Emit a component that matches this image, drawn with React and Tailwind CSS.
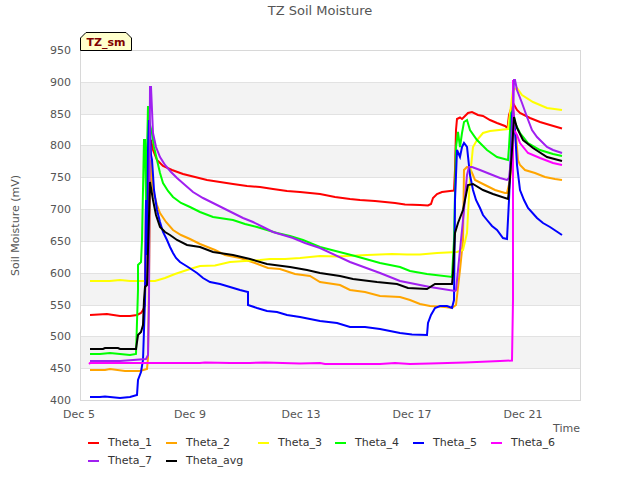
const series = [
  ["#ff0000", "90,315 107,314 110,314.5 120,316 130,316 137,315 141,313 143,310 145,305 146,201 147,250 149,150 151,140 153,150 157,160 163,166 172,170 183,174 195,177 207,180 220,182 233,184 247,186 260,187 273,189 287,191 300,192 320,194 335,197 350,199 360,200 375,201 395,203 405,204.5 420,205 428,205.5 431,204 433,198 437,194 442,192 450,191 454,190.5 455,170 456,130 457,119 460,117.5 462,119 465,116 468,113 472,112 478,115 483,116 490,120 497,123 505,126 507.5,128 509,115 513,103 517,110 520,113 530,118 540,122 550,125 562,128.5"],
  ["#ffa500", "90,370 105,370 110,369 125,371 140,371 147,369 148,358 150,200 151,160 153,190 157,205 160,213 166,222 173,230 181,235 190,239 200,244 215,250 225,255 240,258 255,263 268,268 280,269 295,274 310,276 320,282 340,285 350,290 365,292 380,296 400,297 410,300 420,304 430,306 445,307 452,308 456,305 460,270 463,240 464,170 467,167 470,168 475,180 485,185 495,190 505,193 507,193 510,180 512,160 514,130 516,135 518,160 520,165 525,170 535,173 545,177 555,179 562,180"],
  ["#ffff00", "90,281 110,281 120,280 130,281 145,281 155,281 165,278 175,274 190,269 200,266 215,265.5 230,262 245,261 260,260 270,259 285,259 300,258 320,256 337,256.5 367,255 392,254 407,254.6 420,254.6 437,253 457,252 463,250 467,233 470,177 473,147 477,140 483,133 490,131 508,129 510,113 513,90 517,88 522,95 533,102 547,108 562,110"],
  ["#00ff00", "90,354 100,354 110,353 120,354 130,355 136,354 138,290 138,265 141,262 142,240 144,140 145,140 146,200 148,106 150,125 152,133 154,147 157,160 160,173 163,183 168,191 173,197 181,203 190,207 200,212 213,217 233,220 245,224 257,227 277,233 290,236 303,240 320,247 355,256 380,263 400,267 410,271 427,274 452,277 454,240 456,147 458,132 460,147 462,133 464,122 467,120 470,130 477,140 487,150 497,157 508,160 509,147 511,113 513,110 515,123 520,133 528,143 540,150 553,154 562,156"],
  ["#0000ff", "90,397 100,397 105,396.5 120,398 130,397 137,395 138,380 141,372 143,360 145,300 146,200 147,255 148,150 149,120 150,130 151,155 152,160 154,190 157,210 160,222 163,232 167,240 170,247 173,253 176,258 180,262 188,267 197,273 203,278 210,282 220,284 230,287 240,290 248,292 248,305 257,308 267,311 277,312 287,315 300,317 320,321 337,323 350,327 365,327 380,329 390,331 400,333 412,334.5 427,335 428,323 431,315 435,308 440,306 447,306 452,308 454,300 455,200 457,150 460,157 462,147 464,143 467,147 470,175 473,190 476,200 480,208 483,215 487,220 492,226 497,230 503,238 507,239 509,200 511,150 512,115 513,110 515,130 517,165 520,190 524,200 528,208 537,218 543,223 550,227 556,231 562,235"],
  ["#ff00ff", "89,364 90,363 130,363 148,363 200,363 205,362.5 230,363 250,363 265,362.5 300,363.5 320,363 325,364 380,364 395,363 410,364 430,363.5 465,362.5 500,361 512,360.5 513,300 513,80 514,130 517,135 520,143 528,153 540,158 553,163 562,165"],
  ["#a020f0", "90,361 120,361 146,359 148,355 149,300 150,87 151,87 153,133 156,147 160,157 165,165 171,172 177,178 185,185 193,192 203,198 213,203 223,208 233,213 243,218 253,222 263,227 273,232 283,235 293,238 305,243 320,248 350,262 380,273 400,281 420,285 430,287 455,291 456,290 460,250 464,210 467,175 469,167 472,167 480,170 490,174 500,178 507,180 509,178 511,160 513,110 514,80 515,80 517,90 522,103 527,117 532,130 537,137 547,147 553,150 562,153"],
  ["#000000", "90,349 103,349 105,348 118,348 120,349 136,349 138,335 141,332 143,325 144,300 145,287 147,285 148,250 150,182 153,200 156,215 160,227 165,232 170,235 177,240 187,245 200,247 213,252 233,255 250,259 267,264 290,267 307,270 320,273 340,276 353,279 377,282 397,284 408,288 427,289 435,284 452,284 453,273 455,233 458,223 463,210 468,185 473,184 483,190 493,194 508,199 509,190 512,150 514,117 517,128 523,140 533,148 547,157 562,161"],
];
const ticks = [950, 900, 850, 800, 750, 700, 650, 600, 550, 500, 450, 400];
const gridY = [82.5, 114.5, 145.5, 177.5, 209.5, 241.5, 273.5, 305.5, 336.5, 368.5];
const bands = [[82.5, 32], [145.5, 32], [209.5, 32], [273.5, 32], [336.5, 32]];
const legend = [
  ["Theta_1", "#ff0000"], ["Theta_2", "#ffa500"], ["Theta_3", "#ffff00"], ["Theta_4", "#00ff00"], ["Theta_5", "#0000ff"], ["Theta_6", "#ff00ff"],
  ["Theta_7", "#a020f0"], ["Theta_avg", "#000000"],
];

export default function App() {
  return (
    <div className="relative w-[640px] h-[480px] overflow-hidden bg-white text-[11px] leading-[13px] text-[#555555] font-['DejaVu_Sans',sans-serif]">
      <h1 className="h-[50px] pt-[3px] text-center text-[13px] leading-[16px] font-normal">TZ Soil Moisture</h1>
      <div className="flex h-[351px]">
        <div className="w-[30px] flex items-center justify-center">
          <span className="[writing-mode:vertical-rl] rotate-180">Soil Moisture (mV)</span>
        </div>
        <div className="w-[41px] -my-[6px] flex flex-col justify-between items-end">
          {ticks.map((t) => <span key={t}>{t}</span>)}
        </div>
        <div className="relative ml-[9px]">
          <svg width="501" height="351" viewBox="80 50 501 351" className="block">
            {bands.map(([y, h]) => <rect key={y} x="80" y={y} width="500" height={h} fill="#f3f3f3" />)}
            {gridY.map((y) => <line key={y} x1="80" x2="580" y1={y} y2={y} stroke="#e2e2e2" strokeWidth="1" />)}
            <rect x="80.5" y="50.5" width="500" height="350" fill="none" stroke="#d8d8d8" strokeWidth="1" />
            {series.map(([c, p]) => <polyline key={c} points={p} fill="none" stroke={c} strokeWidth="2" />)}
          </svg>
          <div className="absolute left-0 -top-[18px] w-[52px] h-[19px] flex items-center justify-center pt-[2px] text-[11px] font-bold text-[#800000]">
            <svg width="52" height="19" viewBox="0 0 52 19" className="absolute inset-0">
              <polygon points="0.5,18.5 0.5,6 6,0.5 46,0.5 51.5,6 51.5,18.5" fill="#ffffcc" stroke="#000000" strokeWidth="1" />
            </svg>
            <span className="relative">TZ_sm</span>
          </div>
        </div>
      </div>
      <div className="flex pl-[23.5px] pt-[7px]">
        {["Dec 5", "Dec 9", "Dec 13", "Dec 17", "Dec 21"].map((d) => (
          <span key={d} className="w-[111px] text-center">{d}</span>
        ))}
      </div>
      <span className="absolute left-[553px] top-[422px]">Time</span>
      <div className="grid grid-cols-[78px_92px_77px_78px_78px_78px] gap-y-[5px] pl-[88px] pt-[15px] text-[#333333]">
        {legend.map(([n, c]) => (
          <div key={n} className="flex items-center h-[13px]">
            <span className="w-[11px] h-[2px] mr-[9px] mt-[1px]" style={{ backgroundColor: c }} />
            <span>{n}</span>
          </div>
        ))}
      </div>
    </div>
  );
}
